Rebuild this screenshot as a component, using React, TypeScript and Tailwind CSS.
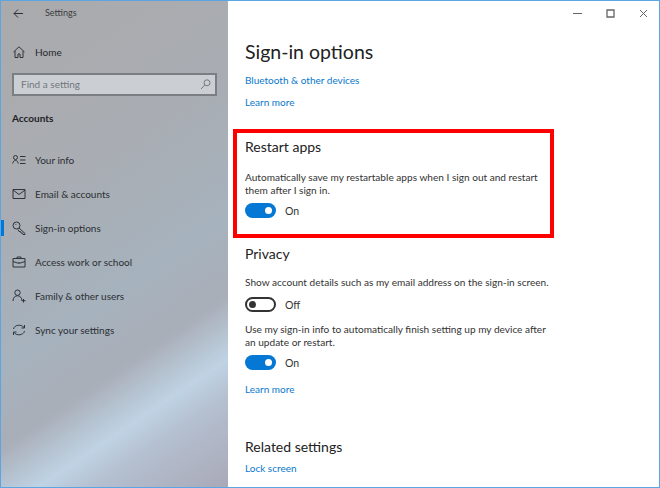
const font = { fontFamily: 'Lato, "Open Sans", sans-serif' };

const NavIcon = ({ d }: { d: string }) => (
  <svg className="w-[14px] h-[14px] shrink-0 text-[#30343a]" viewBox="0 0 14 14" fill="none" stroke="currentColor" strokeWidth="1">
    <path d={d} />
  </svg>
);

const navItems = [
  { label: "Your info", d: "M3.5 2.5a2 2 0 1 1 0 4 2 2 0 1 1 0-4M0.8 10.5c0-4 5.4-4 5.4 0M8 3.5h5.5M8 7h5.5M8 10.5h5.5" },
  { label: "Email & accounts", d: "M1 2.5h12v9H1zM1 3l6 4.5L13 3" },
  { label: "Sign-in options", d: "M4.5 1a3.5 3.5 0 1 1 0 7 3.5 3.5 0 1 1 0-7M7 7l6 5.5v1h-2l-.5-1.500h-1.500l-.5-1.500h-1.500L6 8.500M3.500 3.500h.8" },
  { label: "Access work or school", d: "M1 3.500h12v8.500H1zM5 3.500V2h4v1.500M1 6.500l4.500 1.500h3L13 6.500M7 7v1.500" },
  { label: "Family & other users", d: "M5.500 1a2.700 2.700 0 1 1 0 5.400 2.700 2.700 0 1 1 0-5.400M1 12c0-7 9-7 9 0M11.500 10v3.500M10 11.700h3.500" },
  { label: "Sync your settings", d: "M1.500 6C2.500 1.500 9.500 1 12 4.500M12.500 8C11.500 12.500 4.500 13 2 9.500M12.500 2v3h-3M1.500 12V9h3" },
];

const Toggle = ({ on }: { on: boolean }) => (
  <div className="flex items-center gap-[9px]">
    {on ? (
      <div className="w-[31px] h-[15px] rounded-full bg-[#0478d4] flex items-center justify-end pr-[4px]">
        <div className="w-[7px] h-[7px] rounded-full bg-white" />
      </div>
    ) : (
      <div className="w-[31px] h-[15px] rounded-full border-2 border-[#333] flex items-center pl-[2px]">
        <div className="w-[7px] h-[7px] rounded-full bg-[#333]" />
      </div>
    )}
    <span className="text-[10.5px] leading-[15px] translate-y-[1px] text-[#333]">{on ? "On" : "Off"}</span>
  </div>
);

export default function App() {
  return (
    <div style={font} className="w-[660px] h-[488px] flex overflow-hidden border border-[#5aa5e2] bg-white">
      <aside className="w-[227px] h-full shrink-0 flex flex-col bg-[linear-gradient(146deg,#aaaaac_0%,#a9adb3_35%,#a6b2bd_58%,#a9aeb8_70%,#bfd3e4_80%,#b4bfcf_86%,#a9a9b8_100%)]">
        <div className="flex items-center h-[24px] pl-[12px]">
          <svg className="w-[11px] h-[11px] text-[#2c2f33]" viewBox="0 0 11 11" fill="none" stroke="currentColor" strokeWidth="1">
            <path d="M10 5.500H1M5 1.500l-4 4 4 4" />
          </svg>
          <span className="ml-[21px] text-[9px] text-[#3a3d41]">Settings</span>
        </div>
        <div className="flex items-center gap-[10px] pl-[12px] mt-[18px] h-[18px]">
          <svg className="w-[12px] h-[12px] text-[#30343a]" viewBox="0 0 12 12" fill="none" stroke="currentColor" strokeWidth="1">
            <path d="M0.500 6L6 0.800 11.500 6M2 5v6.500h3V8h2v3.500h3V5" />
          </svg>
          <span className="text-[10px] text-[#26292d]">Home</span>
        </div>
        <div className="mx-[11px] mt-[12px] h-[23px] border-2 border-[#7b7f84] bg-[#cbcfd4] flex items-center justify-between pl-[7px] pr-[4px]">
          <span className="text-[10px] text-[#72767b]">Find a setting</span>
          <svg className="w-[11px] h-[11px] text-[#777b80]" viewBox="0 0 11 11" fill="none" stroke="currentColor" strokeWidth="1">
            <path d="M7 0.800a3 3 0 1 1 0 6 3 3 0 1 1 0-6M4.800 6L1 10" />
          </svg>
        </div>
        <div className="pl-[11px] mt-[13px] text-[10px] leading-[18px] font-bold text-[#1f2225]">Accounts</div>
        <nav className="mt-[16px] flex flex-col">
          {navItems.map((item) => (
            <div key={item.label} className="relative flex items-center h-[34px] pl-[11px] gap-[9px]">
              {item.label === "Sign-in options" && (
                <div className="absolute left-0 top-[9px] w-[3px] h-[16px] bg-[#0078d7]" />
              )}
              <NavIcon d={item.d} />
              <span className="text-[10px] text-[#2b2e33]">{item.label}</span>
            </div>
          ))}
        </nav>
      </aside>
      <main className="flex-1 min-w-0 flex flex-col">
        <div className="flex justify-end h-[24px] items-center pr-[11px] gap-[24px] text-[#666]">
          <svg className="w-[9px] h-[9px]" viewBox="0 0 9 9" stroke="currentColor" strokeWidth="1">
            <path d="M0 4.500h9" />
          </svg>
          <svg className="w-[9px] h-[9px]" viewBox="0 0 9 9" fill="none" stroke="currentColor" strokeWidth="1.300">
            <path d="M1 1h7v7H1z" />
          </svg>
          <svg className="w-[9px] h-[9px]" viewBox="0 0 9 9" stroke="currentColor" strokeWidth="1">
            <path d="M1 1l7 7M8 1L1 8" />
          </svg>
        </div>
        <div className="pl-[17px] flex flex-col">
          <h1 className="mt-[12px] text-[19.5px] leading-[30px] text-[#222]">Sign-in options</h1>
          <a className="mt-[5px] text-[10px] leading-[16px] text-[#0a78cc]">Bluetooth &amp; other devices</a>
          <a className="mt-[6px] text-[10px] leading-[16px] text-[#0a78cc]">Learn more</a>
        </div>
        <section className="mt-[19px] ml-[5px] w-[321px] h-[109px] border-[4px] border-[#fe0000] pl-[8px]">
          <h2 className="mt-[3px] text-[14px] leading-[22px] text-[#222]">Restart apps</h2>
          <p className="mt-[13px] w-[305px] text-[10.1px] leading-[13px] text-[#333]">
            Automatically save my restartable apps when I sign out and restart them after I sign in.
          </p>
          <div className="mt-[6px]">
            <Toggle on />
          </div>
        </section>
        <div className="pl-[17px] flex flex-col">
          <h2 className="mt-[5px] text-[14px] leading-[22px] text-[#222]">Privacy</h2>
          <p className="mt-[10px] text-[10.1px] leading-[15px] text-[#333] whitespace-nowrap">
            Show account details such as my email address on the sign-in screen.
          </p>
          <div className="mt-[7px]">
            <Toggle on={false} />
          </div>
          <p className="mt-[11px] w-[310px] text-[10.1px] leading-[13px] text-[#333]">
            Use my sign-in info to automatically finish setting up my device after an update or restart.
          </p>
          <div className="mt-[6px]">
            <Toggle on />
          </div>
          <a className="mt-[11px] text-[10px] leading-[16px] text-[#0a78cc]">Learn more</a>
          <h2 className="mt-[39px] text-[14px] leading-[22px] text-[#222]">Related settings</h2>
          <a className="mt-[2px] text-[10px] leading-[16px] text-[#0a78cc]">Lock screen</a>
        </div>
      </main>
    </div>
  );
}
